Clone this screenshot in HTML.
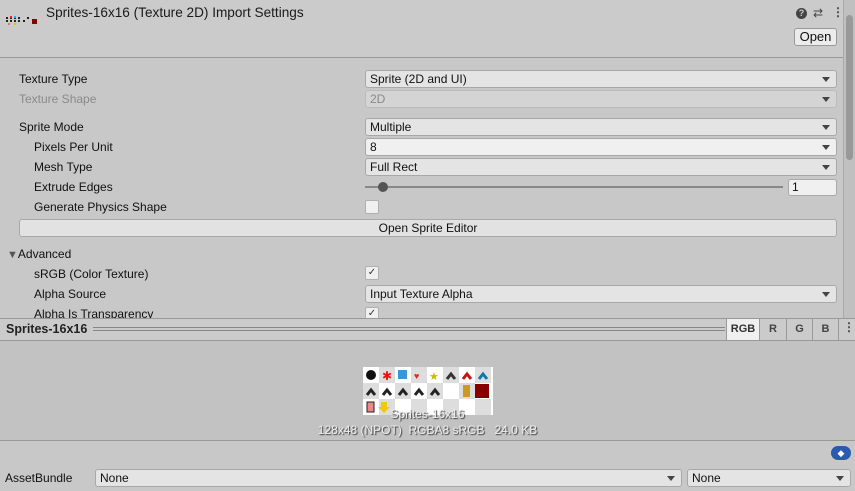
<!DOCTYPE html><html><head><style>
*{box-sizing:border-box;margin:0;padding:0}
body{width:855px;height:491px;overflow:hidden;background:#c8c8c8;font-family:"Liberation Sans",sans-serif;font-size:12px;color:#101010;position:relative}
.a{position:absolute}
.lbl{position:absolute;left:19px;line-height:20px}
.ind{left:34px}
.dd{position:absolute;left:365px;width:472px;height:18px;background:#e4e4e4;border:1px solid #a8a8a8;border-radius:3px;padding-left:4px;line-height:16px}
.dd:after{content:"";position:absolute;right:6px;top:6px;border-left:4px solid transparent;border-right:4px solid transparent;border-top:5px solid #444}
.cb{position:absolute;left:365px;width:14px;height:14px;background:#f0f0f0;border:1px solid #b0b0b0;border-radius:2px;font-size:10px;line-height:12px;text-align:center;color:#333}
</style></head><body>
<div class="a" style="left:0;top:0;width:843px;height:58px;background:#cbcbcb;border-bottom:1px solid #999"></div>
<svg class="a" style="left:6px;top:15px" width="32" height="12"><g fill="#222"><rect x="0" y="2" width="2" height="2"/><rect x="4" y="2" width="2" height="2"/><rect x="8" y="2" width="2" height="2"/><rect x="12" y="2" width="2" height="2"/><rect x="0" y="5" width="2" height="2"/><rect x="4" y="5" width="2" height="2"/><rect x="8" y="5" width="2" height="2"/><rect x="12" y="5" width="2" height="2"/><rect x="17" y="5" width="2" height="2"/><rect x="21" y="2" width="2" height="2"/></g><rect x="26" y="4" width="5" height="5" fill="#800"/><rect x="2" y="8" width="2" height="2" fill="#d77"/><rect x="8" y="8" width="2" height="2" fill="#cc0"/><rect x="4" y="1" width="2" height="2" fill="#e22"/><rect x="8" y="1" width="2" height="2" fill="#3ae"/></svg>
<div class="a" style="left:46px;top:5px;font-size:13.6px;color:#1a1a1a">Sprites-16x16 (Texture 2D) Import Settings</div>
<div class="a" style="left:796px;top:8px;width:11px;height:11px;border-radius:50%;background:#444;color:#ccc;font-size:9px;font-weight:bold;text-align:center;line-height:11px">?</div>
<div class="a" style="left:813px;top:6px;font-size:12px;color:#444">⇄</div>
<div class="a" style="left:832px;top:5px;font-size:12px;font-weight:bold;color:#444">⋮</div>
<div class="a" style="left:794px;top:28px;width:43px;height:18px;background:#ececec;border:1px solid #999;border-radius:3px;text-align:center;line-height:16px;font-size:13px">Open</div>
<div class="a" style="left:843px;top:0;width:12px;height:319px;background:#c0c0c0;border-left:1px solid #aaa"></div>
<div class="a" style="left:846px;top:15px;width:7px;height:145px;background:#999;border-radius:4px"></div>
<div class="lbl" style="top:69px">Texture Type</div><div class="dd" style="top:70px">Sprite (2D and UI)</div>
<div class="lbl" style="top:89px;color:#8a8a8a">Texture Shape</div><div class="dd" style="top:90px;color:#8a8a8a;background:#d4d4d4;border-color:#bbb">2D</div>
<div class="lbl" style="top:117px">Sprite Mode</div><div class="dd" style="top:118px">Multiple</div>
<div class="lbl ind" style="top:137px">Pixels Per Unit</div><div class="dd" style="top:138px;background:#f0f0f0">8</div>
<div class="lbl ind" style="top:157px">Mesh Type</div><div class="dd" style="top:158px">Full Rect</div>
<div class="lbl ind" style="top:177px">Extrude Edges</div>
<div class="a" style="left:365px;top:186px;width:418px;height:2px;background:#888"></div>
<div class="a" style="left:378px;top:182px;width:10px;height:10px;border-radius:50%;background:#555"></div>
<div class="a" style="left:788px;top:179px;width:49px;height:17px;background:#f0f0f0;border:1px solid #aaa;border-radius:3px;padding-left:3px;line-height:15px">1</div>
<div class="lbl ind" style="top:197px">Generate Physics Shape</div><div class="cb" style="top:200px"></div>
<div class="a" style="left:19px;top:219px;width:818px;height:18px;background:#e2e2e2;border:1px solid #a8a8a8;border-radius:3px;text-align:center;line-height:16px">Open Sprite Editor</div>
<div class="lbl" style="top:244px;left:7px"><span style="font-size:11px;color:#555">▼</span>Advanced</div>
<div class="lbl ind" style="top:264px">sRGB (Color Texture)</div><div class="cb" style="top:266px">✓</div>
<div class="lbl ind" style="top:284px">Alpha Source</div><div class="dd" style="top:285px">Input Texture Alpha</div>
<div class="a" style="left:0;top:302px;width:843px;height:17px;overflow:hidden"><div class="lbl ind" style="top:2px">Alpha Is Transparency</div><div class="cb" style="top:5px">✓</div></div>
<div class="a" style="left:0;top:318px;width:855px;height:23px;background:#cbcbcb;border-top:1px solid #999;border-bottom:1px solid #999"></div>
<div class="a" style="left:6px;top:322px;font-weight:bold;font-size:12.5px;color:#222">Sprites-16x16</div>
<div class="a" style="left:93px;top:327px;width:632px;height:4px;border-top:1px solid #888;border-bottom:1px solid #888"></div>
<div class="a" style="left:726px;top:319px;width:33px;height:21px;background:#f0f0f0;border-left:1px solid #999;font-weight:bold;font-size:11px;text-align:center;line-height:21px;color:#333">RGB</div>
<div class="a" style="left:759px;top:319px;width:27px;height:21px;border-left:1px solid #999;font-weight:bold;font-size:11px;text-align:center;line-height:21px;color:#444">R</div>
<div class="a" style="left:786px;top:319px;width:26px;height:21px;border-left:1px solid #999;font-weight:bold;font-size:11px;text-align:center;line-height:21px;color:#444">G</div>
<div class="a" style="left:812px;top:319px;width:27px;height:21px;border-left:1px solid #999;border-right:1px solid #999;font-weight:bold;font-size:11px;text-align:center;line-height:21px;color:#444">B</div>
<div class="a" style="left:843px;top:320px;font-weight:bold;color:#444">⋮</div>
<div class="a" style="left:0;top:341px;width:855px;height:100px;background:#c2c2c2;border-bottom:1px solid #999"></div>
<svg class="a" style="left:363px;top:367px" width="130" height="48"><g fill="#fff"><rect width="130" height="48"/></g><g fill="#ddd"><rect x="16" y="0" width="16" height="16"/><rect x="48" y="0" width="16" height="16"/><rect x="80" y="0" width="16" height="16"/><rect x="112" y="0" width="16" height="16"/><rect x="0" y="16" width="16" height="16"/><rect x="32" y="16" width="16" height="16"/><rect x="64" y="16" width="16" height="16"/><rect x="96" y="16" width="16" height="16"/><rect x="16" y="32" width="16" height="16"/><rect x="48" y="32" width="16" height="16"/><rect x="80" y="32" width="16" height="16"/><rect x="112" y="32" width="16" height="16"/></g>
<circle cx="8" cy="8" r="5" fill="#111"/><text x="19" y="13" fill="#e11" font-size="12">✱</text><rect x="35" y="3" width="9" height="9" fill="#39d"/><text x="51" y="12" fill="#e22" font-size="9">♥</text><text x="66" y="13" fill="#cb0" font-size="11">★</text>
<g fill="none" stroke-width="3"><path d="M84 12l4-5 4 5" stroke="#333"/><path d="M100 12l4-5 4 5" stroke="#c11"/><path d="M116 12l4-5 4 5" stroke="#17a"/><path d="M4 28l4-5 4 5" stroke="#222"/><path d="M20 28l4-5 4 5" stroke="#222"/><path d="M36 28l4-5 4 5" stroke="#222"/><path d="M52 28l4-5 4 5" stroke="#222"/><path d="M68 28l4-5 4 5" stroke="#222"/></g>
<rect x="100" y="18" width="7" height="12" fill="#c92"/><rect x="112" y="17" width="14" height="14" fill="#800"/><rect x="4" y="35" width="7" height="10" fill="#e88" stroke="#222"/><path d="M18 35h6v5h3l-6 6-6-6h3z" fill="#ec0"/></svg>
<div class="a" style="left:0;top:407px;width:855px;text-align:center;font-size:12px;color:#eee;text-shadow:1px 1px 1px #333">Sprites-16x16</div>
<div class="a" style="left:0;top:423px;width:855px;text-align:center;font-size:12px;color:#eee;text-shadow:1px 1px 1px #333">128x48 (NPOT)&nbsp; RGBA8 sRGB&nbsp;&nbsp; 24.0 KB</div>
<div class="a" style="left:831px;top:446px;width:20px;height:14px;border-radius:7px;background:#2a5ab0;color:#fff;font-size:9px;text-align:center;line-height:14px">◆</div>
<div class="a" style="left:5px;top:469px;line-height:18px">AssetBundle</div>
<div class="dd" style="left:95px;top:469px;width:587px">None</div>
<div class="dd" style="left:687px;top:469px;width:164px">None</div>
</body></html>
